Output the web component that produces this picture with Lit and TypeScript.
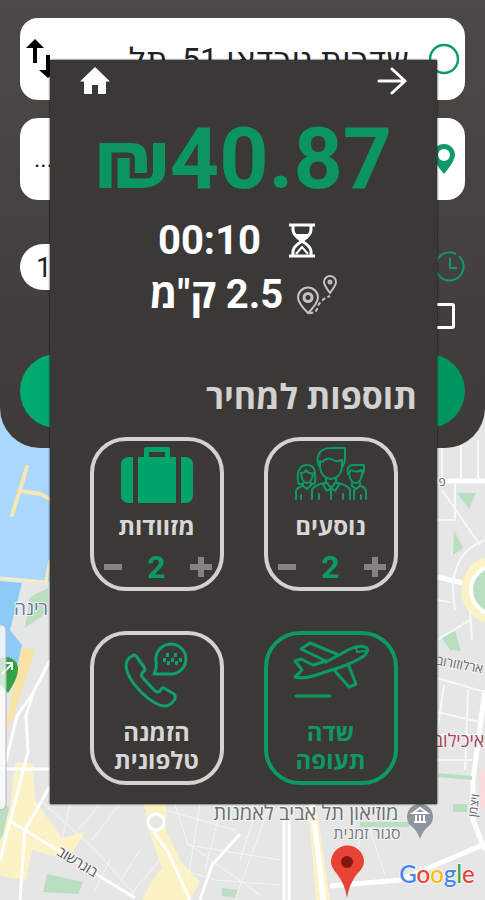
import { LitElement, html, css, svg } from "lit";
import { customElement, state, property } from "lit/decorators.js";

const homeIcon = html`<svg width="30" height="30" viewBox="0 0 30 30" aria-hidden="true">
  <path fill="#fff" d="M15 1 L30 15.500 H26 V27 Q26 28 25 28 H18 V19 H12 V28 H5 Q4 28 4 27 V15.500 H0 Z" />
</svg>`;

const arrowIcon = html`<svg width="30" height="30" viewBox="0 0 30 30" aria-hidden="true">
  <path fill="none" stroke="#fff" stroke-width="3" stroke-linecap="round" stroke-linejoin="round"
    d="M2 15 H27 M15 3 L28 15 L15 27" />
</svg>`;

const hourglassIcon = html`<svg width="40" height="40" viewBox="0 0 40 40" aria-hidden="true">
  <g fill="none" stroke="#fff" stroke-width="3">
    <path d="M0 4 H26 M0 35 H26" />
    <path d="M4 5 V9 Q4 14 13 20 Q22 26 22 30 V35 M22 5 V9 Q22 14 13 20 Q4 26 4 30 V35" />
  </g>
  <path fill="#fff" d="M6 13 H20 L13 20 Z" />
  <path fill="none" stroke="#fff" stroke-width="2" d="M7 33 L13 26 L19 33" />
</svg>`;

const routeIcon = html`<svg width="40" height="40" viewBox="0 0 40 40" aria-hidden="true">
  <g fill="none" stroke="#c4c3c2" stroke-width="2">
    <path d="M11 38 Q1 28 1 22.500 A10 10 0 0 1 21 22.500 Q21 28 11 38 Z" />
    <circle cx="11" cy="22.500" r="4" stroke-width="3" />
    <path d="M33 18 Q27 10 27 7 A6 6 0 0 1 39 7 Q39 10 33 18 Z" />
    <circle cx="33" cy="7" r="1.500" />
    <path d="M12 38 Q19 38 20 34 Q22 25 33 21" stroke-dasharray="4 2.500" />
  </g>
</svg>`;

const suitcaseIcon = html`<svg class="art" width="72" height="60" viewBox="0 0 72 60" aria-hidden="true">
  <g fill="#00a368">
    <path d="M12 12 V58 H8 Q0 58 0 50 V20 Q0 12 8 12 Z" />
    <path d="M60 12 V58 H64 Q72 58 72 50 V20 Q72 12 64 12 Z" />
    <path fill-rule="evenodd" d="M17 12 H23 V4 Q23 2 25 2 H47 Q49 2 49 4 V12 H55 V58 H17 Z M28 7 V12 H44 V7 Z" />
  </g>
</svg>`;

const peopleIcon = html`<svg class="art" width="72" height="60" viewBox="0 0 72 60" aria-hidden="true">
  <g fill="none" stroke="#0c9a63" stroke-width="2" stroke-linejoin="round" stroke-linecap="round">
    <path d="M24 21 Q21 15 24 9 Q27 3 36 3 H50 V13 Q50 17 48 21" />
    <path d="M25 16 V22 Q26 33 36 34 Q46 33 47 22 V15" />
    <path d="M27 17 Q32 12 36 14 Q42 18 46 15" />
    <path d="M31 33 V37 L36 43 L41 37 V33 M31 37 L28 40 L32 46 L36 43 L40 46 L44 40 L41 37 M36 44 V54" />
    <path d="M28 38 Q18 41 17 45 V54 M44 38 Q54 41 55 45 V54 M24 49 V54 M48 49 V54" />
    <path d="M4 39 Q2 36 3 29 Q4 20 12 20 Q20 20 20 29 Q21 36 19 39" />
    <path d="M6 28 Q7 38 12 38 Q17 38 18 28 Q13 29 11 25 Q10 28 6 28 M4 39 H8 M16 39 H19" />
    <path d="M8 38 V41 L12 44 L16 40 V38 M7 41 Q1 43 1 47 V54 M6 50 V54" />
    <path d="M53 29 Q51 21 57 20 H69 V26 L67 30" />
    <path d="M54 28 Q55 38 61 38 Q66 38 67 28 V25 Q61 28 56 25 Z" />
    <path d="M57 38 V41 L61 44 L65 41 V38 M66 41 Q71 43 71 47 V54 M66 50 V54 M59 45 V54" />
  </g>
</svg>`;

const phoneIcon = html`<svg class="art" width="72" height="68" viewBox="0 0 72 68" aria-hidden="true">
  <g fill="none" stroke="#10a06a" stroke-width="3" stroke-linejoin="round" stroke-linecap="round">
    <path d="M11 15 Q5 18 5 25 Q6 37 21 52 Q36 66 45 65 Q50 64 54 58 Q55 55 53 53 L43 47 Q41 46 39 50 Q37 52 34 50 L22 37 Q19 34 22 31 Q25 29 23 26 L15 15 Q13 13 11 15 Z" />
    <path d="M33 33 H51 A15 15 0 1 0 35 20 Q36 27 33 33 Z" />
  </g>
  <path fill="#10a06a" d="M45 12 h3 v4 h-3z M53 12 h3 v4 h-3z M42 17 h3 v4 h-3z M50 17 h3 v4 h-3z M58 17 h3 v4 h-3z M46 20 h3 v4 h-3z M54 20 h3 v4 h-3z" />
</svg>`;

const planeIcon = html`<svg class="art" width="76" height="68" viewBox="0 0 76 68" aria-hidden="true">
  <g fill="none" stroke="#0c9a63" stroke-width="3" stroke-linejoin="round" stroke-linecap="round">
    <path d="M46 14 L57 8 Q68 3 74 7 Q76 10 71 15 Q62 21 48 26 L20 35 Q10 38 2 36 L9 29 L2 20 L8 18 L20 24 L33 20 L8 8 L17 2 L46 14 L33 21" />
    <path d="M41 29 L56 46 L63 43 L55 23" />
    <path d="M63 6 L64 11 L72 10" stroke-width="2" />
    <path d="M3 55 H37" />
  </g>
</svg>`;

@customElement("city-map")
class CityMap extends LitElement {
  static styles = css`
    :host { display: block; overflow: hidden; }
    .map { display: block; width: 100%; height: 100%; }
    text { font-family: "Open Sans", "Liberation Sans", sans-serif; text-anchor: middle; }
    .halo { paint-order: stroke; stroke: #f4f4f4; stroke-width: 2px; }
    .logo { font-family: Lato, "Open Sans", sans-serif; font-weight: 500; font-size: 24px; }
  `;

  render() {
    return html`<svg class="map" viewBox="0 0 485 900" preserveAspectRatio="xMidYMid slice" role="img" aria-label="מפה">
      ${svg`
      <rect width="485" height="900" fill="#e6e6e6" />
      <path fill="#a9d8fb" d="M0 400 H50 V581 L0 577 Z" />
      <path fill="#8ecaf8" d="M0 581 L22 583 L10 630 L22 645 L14 680 L0 690 Z" />
      <path fill="none" stroke="#f6e7b4" stroke-width="4" stroke-linecap="round" d="M27 467 L12 515 M21 491 L40 494 L52 500" />
      <path fill="none" stroke="#f6ecc8" stroke-width="3" d="M0 578 L46 582 L50 560" />
      <path fill="#b9dfc0" d="M30 597 L48 588 V612 L25 628 Z" />
      <path fill="#f8e2a5" d="M22 647 L35 650 L14 715 L4 735 Z" />
      <path fill="#fbf2c5" d="M15 762 L33 764 L35 800 L62 838 L85 832 L68 860 L32 850 L26 880 L0 876 V825 L10 812 Z" />
      <path fill="#fbf2c5" d="M144 804 H166 V830 L180 860 L200 882 L190 900 H142 L152 880 L162 868 L152 840 Z M308 804 H316 L330 900 H316 Z" />
      <path fill="#b9dfc0" d="M0 800 L9 808 L3 835 L0 840 Z M47 874 L83 882 L78 894 L43 892 Z M222 888 L238 890 L236 898 L222 896 Z M360 822 H410 V827 H360 Z" />
      <path fill="none" stroke="#fff" stroke-width="3" d="M50 660 L33 693 L17 716 L5 765 M33 693 L26 716 L28 752 L0 860 M0 769 H55 M50 786 L25 830 L20 900 M8 820 L28 832 L135 898 M154 832 L168 852 L190 900 M240 834 L212 865 L200 900 M284 820 V900 M289 820 V900 M312 804 L322 900" />
      <path fill="none" stroke="#fff" stroke-width="5" d="M312 804 L324 900 M330 886 L400 880 L485 844" />
      <path fill="none" stroke="#f6f6f6" stroke-width="1" d="M70 804 L60 850 M100 804 L78 830 M120 804 L92 840 M40 800 L95 850 L135 895 M110 860 L95 890 M140 850 L118 885 M160 860 L130 895 M175 804 L188 845 L280 860 M165 810 L235 830 M200 804 L188 880 M222 804 L205 870 M258 804 L240 860 M178 868 L215 880 L280 885 M190 845 L260 895 M270 804 L235 900 M370 830 L385 875 M345 890 L360 840" />
      <circle cx="156" cy="822" r="8" fill="#e6e6e6" stroke="#fff" stroke-width="3" />
      <path fill="none" stroke="#fff" stroke-width="5" d="M437 481 H485 M437 577 L472 585 M485 690 L473 780 V820 L485 850" />
      <path fill="#b9dfc0" d="M457 493 H476 L469 509 Z M454 530 L463 548 L453 555 Z M442 638 L455 631 L461 651 L450 650 Z M438 773 L472 776 V780 L438 777 Z M453 804 H467 V812 H453 Z" />
      <circle cx="495" cy="590" r="34" fill="#fbf2c5" />
      <circle cx="495" cy="590" r="24" fill="#b9dfc0" stroke="#fff" stroke-width="4" />
      <path fill="none" stroke="#f8f8f8" stroke-width="2" d="M442 440 V480 M461 440 V480 M478 440 V480 M442 490 L480 545 M485 540 Q445 555 455 610 M437 520 H455 V482 M437 600 L450 602 M437 640 L470 620 M470 610 L472 640 M437 678 L485 692 M444 685 L436 740 M468 690 L465 770 M437 712 L480 722 M437 760 H472 M437 735 H475" />
      <path fill="#fbdcdc" d="M480 770 H485 V810 L480 808 Z" />
      <path fill="#34a246" d="M8 693 Q-6 678 -6 669 A12 12 0 0 1 18 669 Q18 678 8 693 Z" />
      <path fill="none" stroke="#fff" stroke-width="2" d="M2 674 L12 664 M5 663 L12 663 V670" />
      <path fill="#fff" fill-opacity=".75" stroke="#b5b5b5" d="M-5 625 H2 Q6 625 6 631 V803 Q6 810 0 810 H-5 Z" />
      <text class="halo" x="31" y="615" font-size="19" fill="#65799a">רינה</text>
      <text class="halo" x="442" y="486" font-size="12" fill="#666">פ</text>
      <text class="halo" transform="translate(459 669) rotate(11)" font-size="13" fill="#666">ארלוזורוב</text>
      <text class="halo" x="459" y="747" font-size="18" fill="#a8425a">איכילוב</text>
      <text class="halo" transform="translate(478 806) rotate(-82)" font-size="12" fill="#666">ויצמן</text>
      <text class="halo" transform="translate(75 866) rotate(31)" font-size="14" fill="#555">בוגרשוב</text>
      <text class="halo" x="306" y="820" font-size="20" fill="#6b7075">מוזיאון תל אביב לאמנות</text>
      <text class="halo" x="367" y="839" font-size="16" fill="#777b80">סגור זמנית</text>
      <path fill="#8d969e" d="M420 839 Q417 830 410 825 A13 13 0 1 1 430 825 Q423 830 420 839 Z" />
      <path fill="none" stroke="#fff" stroke-width="2" d="M413 813 L420 808 L427 813 Z M414 822 H426 M416 815 V821 M420 815 V821 M424 815 V821" />
      <path fill="#e94335" d="M347 898 Q345 884 337 874 Q331 867 331 862 A16.500 16.500 0 0 1 364 862 Q364 867 357 874 Q349 884 347 898 Z" />
      <circle cx="347" cy="862" r="6" fill="#841610" />
      <text class="logo halo" x="437" y="883"><tspan fill="#4285f4">G</tspan><tspan fill="#ea4335">o</tspan><tspan fill="#fbbc05">o</tspan><tspan fill="#4285f4">g</tspan><tspan fill="#34a853">l</tspan><tspan fill="#ea4335">e</tspan></text>
      `}
    </svg>`;
  }
}

@customElement("ride-form")
class RideForm extends LitElement {
  static styles = css`
    :host {
      display: block;
      box-sizing: border-box;
      padding: 18px 20px 20px;
      border-radius: 0 0 40px 40px;
      background: linear-gradient(#4e4947, #3d3a38);
      font-family: Roboto, "DejaVu Sans", sans-serif;
    }
    .form { display: flex; flex-direction: column; }
    .field {
      display: flex;
      align-items: center;
      gap: 20px;
      height: 82px;
      box-sizing: border-box;
      padding: 0 6px;
      border-radius: 18px;
      background: #fff;
    }
    .field + .field { margin-top: 18px; }
    input { font-family: inherit; }
    .entry {
      flex: 1;
      min-width: 0;
      border: 0;
      padding: 0;
      background: none;
      color: #222;
      font-size: 32px;
    }
    .end { text-align: left; padding-left: 8px; font-size: 24px; }
    .when { display: flex; align-items: center; gap: 16px; margin-top: 44px; }
    .pill {
      flex: 1;
      min-width: 0;
      height: 46px;
      box-sizing: border-box;
      border: 0;
      border-radius: 23px;
      padding: 0 16px;
      background: #fff;
      color: #222;
      font-size: 28px;
      text-align: left;
    }
    .later { margin: 13px 10px 0 0; }
    .tick {
      display: block;
      appearance: none;
      width: 26px;
      height: 26px;
      margin: 0;
      box-sizing: border-box;
      border: 3px solid #fff;
      border-radius: 3px;
    }
    .submit {
      height: 74px;
      margin-top: 25px;
      border: 0;
      border-radius: 37px;
      background: linear-gradient(90deg, #00ab70, #009460);
    }
    svg { flex: none; }
  `;

  render() {
    return html`<form class="form">
      <div class="field">
        <svg width="30" height="32" viewBox="0 0 30 32" aria-hidden="true">
          <circle cx="15" cy="16" r="14" fill="none" stroke="#119a67" stroke-width="2.500" />
        </svg>
        <input class="entry" aria-label="מוצא" value="שדרות נורדאו 51, תל" />
        <svg width="40" height="40" viewBox="0 0 40 40" aria-hidden="true">
          <path fill="none" stroke="#000" stroke-width="4" d="M9 6 V24 M22 16 V34" />
          <path d="M0 9 L9 0 L18 9 Z M13 31 L22 39 L31 31 Z" />
        </svg>
      </div>
      <div class="field">
        <svg width="30" height="32" viewBox="0 0 30 32" aria-hidden="true">
          <path fill="#119a67" fill-rule="evenodd" d="M15 31 Q4 18 4 12 A11 11 0 0 1 26 12 Q26 18 15 31 Z M15 6 A6 6 0 1 0 15 18 A6 6 0 1 0 15 6 Z" />
        </svg>
        <input class="entry end" aria-label="יעד" value="..." />
      </div>
      <div class="when">
        <svg width="30" height="32" viewBox="0 0 30 32" aria-hidden="true">
          <path fill="none" stroke="#119a67" stroke-width="2" d="M27 9 A14 14 0 1 1 21 3 M27 9 L24 5 M15 7 V17 H22" />
        </svg>
        <input class="pill" aria-label="מועד" value="1" />
      </div>
      <div class="later"><input class="tick" type="checkbox" aria-label="הזמנה עתידית" /></div>
      <button class="submit" type="button" aria-label="חישוב מחיר"></button>
    </form>`;
  }
}

@customElement("extra-counter")
class ExtraCounter extends LitElement {
  @property() label = "";
  @state() count = 2;

  static styles = css`
    :host {
      display: flex;
      flex-direction: column;
      align-items: center;
      box-sizing: border-box;
      height: 154px;
      padding-top: 4px;
      border: 4px solid #d3d2d1;
      border-radius: 36px;
    }
    .label { color: #d8d7d6; font-size: 24px; line-height: 28px; font-weight: 700; margin-top: 8px; }
    .row {
      display: flex;
      align-items: center;
      justify-content: space-between;
      align-self: stretch;
      padding: 0 8px;
      margin-top: 10px;
    }
    .count { color: #0c9a63; font-size: 32px; line-height: 32px; font-weight: 700; }
    button { display: flex; border: 0; padding: 0; background: none; }
  `;

  render() {
    return html`<slot></slot>
      <span class="label">${this.label}</span>
      <div class="row">
        <button aria-label="הוספה" @click=${() => this.count++}>
          <svg width="22" height="22" viewBox="0 0 22 22"><path stroke="#858483" stroke-width="6" d="M0 11 H22 M11 1 V21" /></svg>
        </button>
        <output class="count" aria-label=${this.label}>${this.count}</output>
        <button aria-label="הפחתה" @click=${() => (this.count = Math.max(0, this.count - 1))}>
          <svg width="22" height="22" viewBox="0 0 22 22"><path stroke="#858483" stroke-width="6" d="M2 11 H20" /></svg>
        </button>
      </div>`;
  }
}

@customElement("app-root")
class AppRoot extends LitElement {
  static styles = css`
    :host {
      display: block;
      direction: rtl;
      font-family: Roboto, "Open Sans", "Liberation Sans", sans-serif;
    }
    .page {
      position: relative;
      display: grid;
      grid-template-columns: minmax(0, 1fr);
      min-height: 100vh;
      align-items: start;
    }
    .backdrop { position: absolute; inset: 0; }
    .layer { grid-area: 1 / 1; position: relative; }
    .sheet {
      margin: 60px 48px 20px 50px;
      padding: 4px 20px 19px;
      background: #3b3937;
      box-shadow: 0 0 2px #000;
      display: flex;
      flex-direction: column;
    }
    .bar { display: flex; justify-content: space-between; padding: 0 10px; height: 34px; align-items: center; }
    .icon { display: flex; border: 0; padding: 0; background: none; }
    .price {
      margin: 17px 0 0;
      direction: ltr;
      text-align: center;
      color: #0a9561;
      font-size: 86px;
      line-height: 88px;
      font-weight: 700;
    }
    .facts { display: flex; flex-direction: column; align-items: center; gap: 6px; margin-top: 14px; }
    .fact {
      display: flex;
      align-items: center;
      gap: 14px;
      color: #fff;
      font-size: 40px;
      line-height: 48px;
      font-weight: 700;
      white-space: nowrap;
    }
    .wide { gap: 28px; }
    .title { margin: 54px 0 0; color: #d3d2d1; font-size: 34px; line-height: 48px; font-weight: 700; }
    .extras {
      display: grid;
      grid-template-columns: 134px 134px;
      justify-content: center;
      gap: 40px;
      margin-top: 16px;
    }
    .art { display: block; flex: none; }
    .choice {
      display: flex;
      flex-direction: column;
      align-items: center;
      justify-content: space-between;
      height: 154px;
      box-sizing: border-box;
      padding: 6px 10px;
      border: 4px solid #d3d2d1;
      border-radius: 36px;
      background: none;
      color: #d8d7d6;
      font: inherit;
      font-size: 24px;
      line-height: 28px;
      font-weight: 700;
    }
    .picked { border-color: #0c9a63; color: #0c9a63; }
  `;

  render() {
    return html`<main class="page">
      <city-map class="backdrop"></city-map>
      <ride-form class="layer"></ride-form>
      <section class="layer sheet" role="dialog" aria-label="מחיר הנסיעה">
        <div class="bar">
          <button class="icon" aria-label="חזרה">${arrowIcon}</button>
          <button class="icon" aria-label="דף הבית">${homeIcon}</button>
        </div>
        <p class="price">₪40.87</p>
        <div class="facts">
          <div class="fact wide">${hourglassIcon}<span>00:10</span></div>
          <div class="fact">${routeIcon}<span>2.5 ק"מ</span></div>
        </div>
        <h2 class="title">תוספות למחיר</h2>
        <div class="extras">
          <extra-counter label="נוסעים">${peopleIcon}</extra-counter>
          <extra-counter label="מזוודות">${suitcaseIcon}</extra-counter>
          <button class="choice picked">${planeIcon}<span>שדה<br />תעופה</span></button>
          <button class="choice">${phoneIcon}<span>הזמנה<br />טלפונית</span></button>
        </div>
      </section>
    </main>`;
  }
}
